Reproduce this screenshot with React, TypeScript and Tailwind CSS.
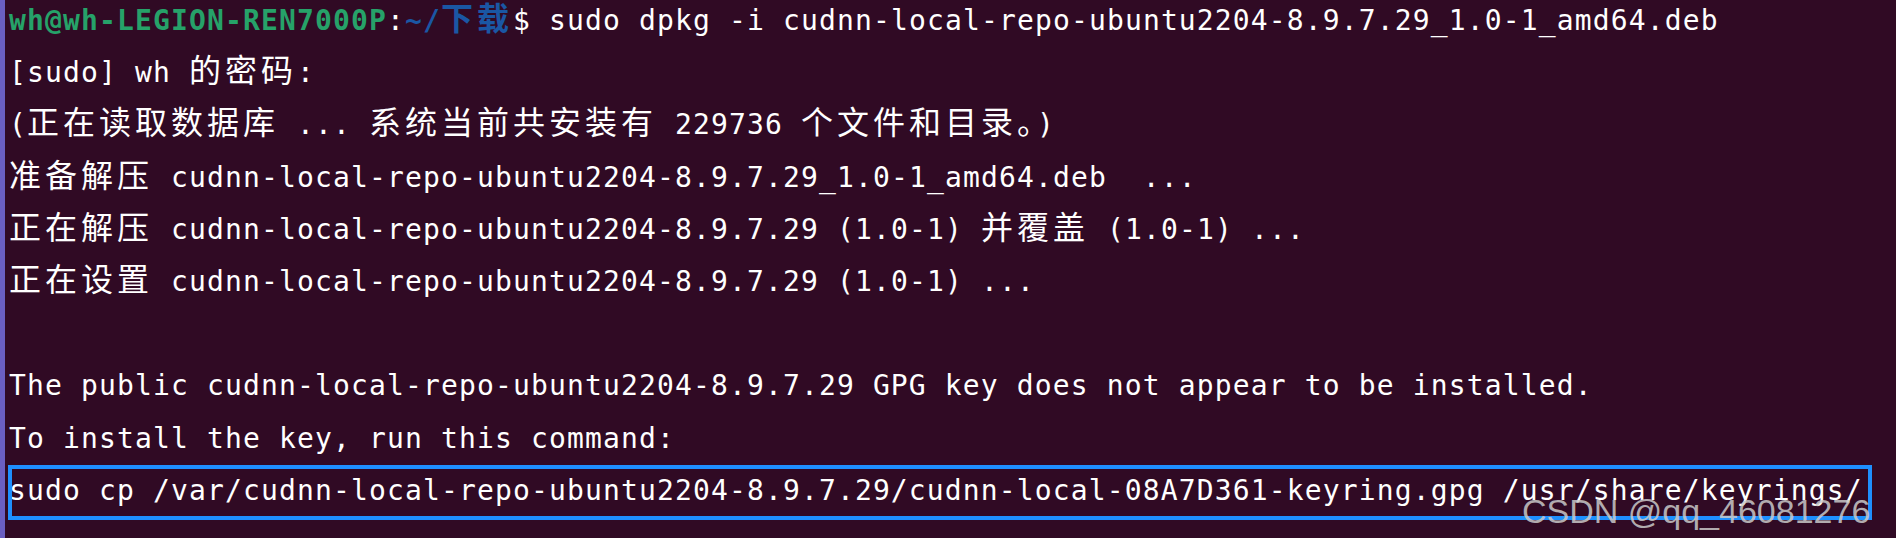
const mono = { fontFamily: '"DejaVu Sans Mono", "Noto Sans CJK SC", monospace' };

// CJK glyphs take two terminal cells (36px)
const Cjk = ({ children }: { children: string }) => (
  <span className="text-[32px] leading-none tracking-[4px] [font-family:'Noto_Sans_CJK_SC',sans-serif]">
    {children}
  </span>
);

const Line = ({ children }: { children?: React.ReactNode }) => (
  <div className="relative h-[52.2px] whitespace-pre leading-[52.2px]">{children}</div>
);

export default function App() {
  return (
    <div className="relative flex h-[538px] w-[1896px] overflow-hidden bg-[#300a24]">
      {/* window edge */}
      <div className="w-[5px] shrink-0 bg-[#6a5fc2]" />

      <div
        className="mt-[-5px] flex-1 pl-[4px] text-[28px] tracking-[1.14px] text-white"
        style={mono}
      >
        <Line>
          <span className="font-bold text-[#26a269]">wh@wh-LEGION-REN7000P</span>:
          <span className="font-bold text-[#1a57a4]">
            ~/<Cjk>下载</Cjk>
          </span>
          $ sudo dpkg -i cudnn-local-repo-ubuntu2204-8.9.7.29_1.0-1_amd64.deb
        </Line>
        <Line>
          [sudo] wh <Cjk>的密码</Cjk>:
        </Line>
        <Line>
          (<Cjk>正在读取数据库</Cjk> ... <Cjk>系统当前共安装有</Cjk> 229736 <Cjk>个文件和目录。</Cjk>)
        </Line>
        <Line>
          <Cjk>准备解压</Cjk> cudnn-local-repo-ubuntu2204-8.9.7.29_1.0-1_amd64.deb  ...
        </Line>
        <Line>
          <Cjk>正在解压</Cjk> cudnn-local-repo-ubuntu2204-8.9.7.29 (1.0-1) <Cjk>并覆盖</Cjk> (1.0-1) ...
        </Line>
        <Line>
          <Cjk>正在设置</Cjk> cudnn-local-repo-ubuntu2204-8.9.7.29 (1.0-1) ...
        </Line>
        <Line />
        <Line>The public cudnn-local-repo-ubuntu2204-8.9.7.29 GPG key does not appear to be installed.</Line>
        <Line>To install the key, run this command:</Line>
        <Line>
          sudo cp /var/cudnn-local-repo-ubuntu2204-8.9.7.29/cudnn-local-08A7D361-keyring.gpg /usr/share/keyrings/
          <span className="pointer-events-none absolute left-[-1px] top-0 h-[55px] w-[1864px] border-4 border-[#1e90ff]" />
        </Line>
      </div>

      {/* watermark */}
      <span className="pointer-events-none absolute left-[1522px] top-[494px] whitespace-pre text-[34px] leading-none text-[#c9c9c9]/85 [font-family:'Liberation_Sans',sans-serif]">
        CSDN @qq_46081276
      </span>
    </div>
  );
}
